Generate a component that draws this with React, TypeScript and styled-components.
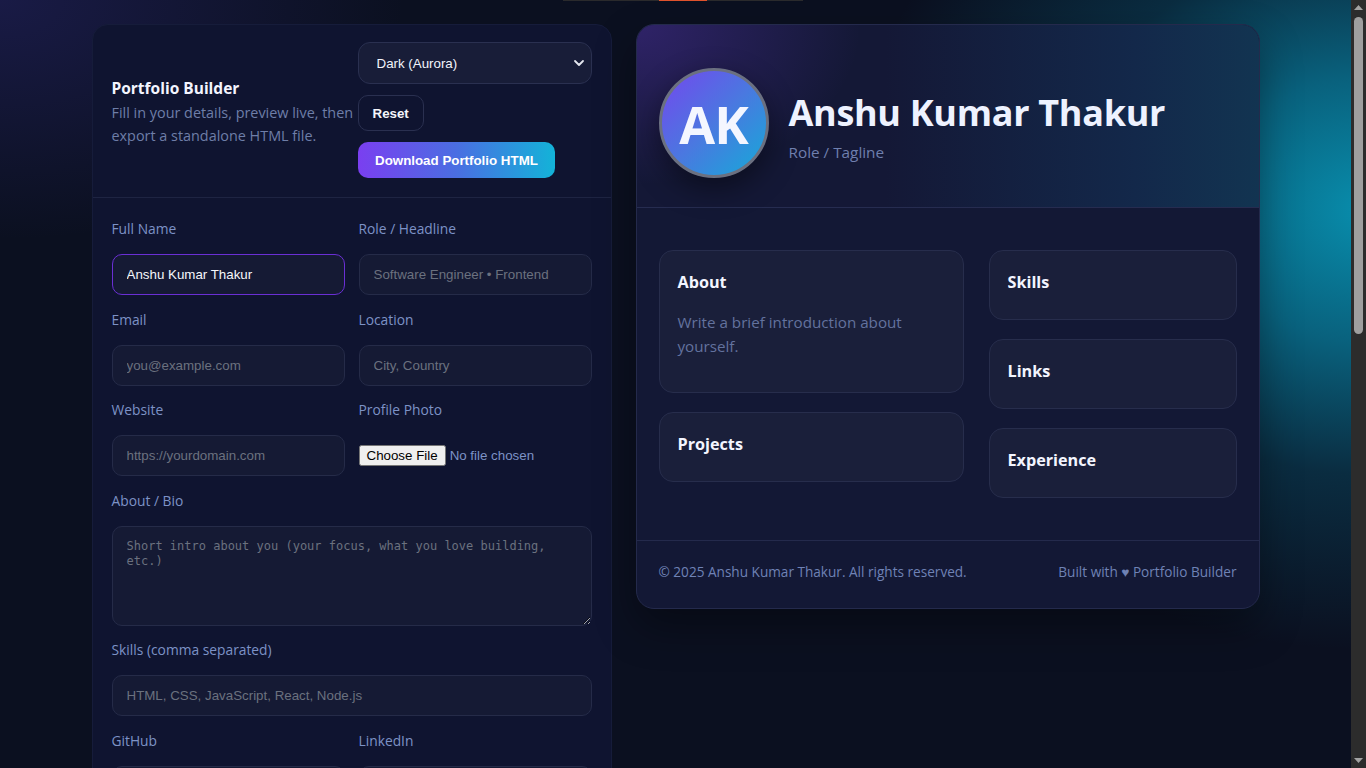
import React from "react";
import styled, { createGlobalStyle } from "styled-components";

const GlobalStyle = createGlobalStyle`
  html, body { margin: 0; padding: 0; }
  body {
    padding-right: 15px;
    background-color: #0b1020;
    background-image:
      radial-gradient(540px 320px at 0% 0%, rgba(70, 60, 190, 0.24), transparent 75%),
      radial-gradient(520px 440px at 100% 210px, rgba(8, 148, 180, 0.95) 0%, rgba(8, 132, 165, 0.7) 30%, rgba(8, 110, 140, 0.3) 60%, transparent 100%);
    background-repeat: no-repeat;
    font-family: "Open Sans", "Noto Sans", sans-serif;
    color: #e5e9f7;
  }
  * { box-sizing: border-box; }
`;

const Loader = styled.div`
  position: fixed;
  top: 0;
  left: 563px;
  width: 240px;
  height: 1px;
  background: #2a2a2c;
  display: flex;
  justify-content: center;
  z-index: 10;
`;

const LoaderBar = styled.div`
  width: 48px;
  height: 1px;
  background: #e0522c;
`;

const ScrollTrack = styled.div`
  position: fixed;
  top: 0;
  right: 0;
  bottom: 0;
  width: 15px;
  background: #2c2c2c;
  display: flex;
  flex-direction: column;
  align-items: center;
  z-index: 20;
`;

const ScrollArrow = styled.svg`
  flex: none;
  margin: 5px 0;
`;

const ScrollThumb = styled.div`
  flex: none;
  width: 9px;
  height: 317px;
  margin-top: 2px;
  border-radius: 5px;
  background: #9f9f9f;
`;

const ScrollSpacer = styled.div`
  flex: 1;
`;

const Container = styled.div`
  max-width: 1200px;
  margin: 0 auto;
  padding: 24px 16px 40px;
  display: grid;
  grid-template-columns: minmax(0, 1fr) minmax(0, 1.2fr);
  gap: 24px;
  align-items: start;
`;

const EditorPanel = styled.section`
  background: #0f1430;
  border: 1px solid #161c3a;
  border-radius: 16px;
  overflow: hidden;
`;

const EditorHeader = styled.header`
  display: grid;
  grid-template-columns: minmax(0, 1fr) minmax(0, 1fr);
  gap: 12px;
  align-items: center;
  padding: 17px 19px 19px;
  border-bottom: 1px solid #1e2442;
`;

const Intro = styled.div`
  display: flex;
  flex-direction: column;
  gap: 2px;
  padding-top: 5px;
  margin-right: -10px;
`;

const BuilderTitle = styled.h1`
  margin: 0;
  font-size: 15.5px;
  font-weight: 700;
  line-height: 21px;
  color: #f3f5ff;
`;

const BuilderDesc = styled.p`
  margin: 0;
  font-size: 14.4px;
  line-height: 23px;
  color: #6e7ea8;
`;

const Actions = styled.div`
  display: flex;
  flex-direction: column;
  align-items: flex-start;
  gap: 11px;
`;

const SelectWrap = styled.div`
  position: relative;
  width: 100%;
`;

const ThemeSelect = styled.select`
  appearance: none;
  width: 100%;
  height: 42px;
  padding: 0 18px;
  background: #181d38;
  border: 1px solid #2a3050;
  border-radius: 12px;
  color: #f2f4fb;
  font: 13.333px "Liberation Sans", Arial, sans-serif;
  outline: none;
`;

const Chevron = styled.svg`
  position: absolute;
  right: 7px;
  top: 50%;
  transform: translateY(-50%);
  pointer-events: none;
`;

const GhostButton = styled.button`
  height: 36px;
  padding: 0 14px;
  background: transparent;
  border: 1px solid #2a3050;
  border-radius: 10px;
  color: #f5f6fb;
  font: 700 13.333px "Liberation Sans", Arial, sans-serif;
`;

const GradientButton = styled.button`
  height: 36px;
  padding: 0 17.5px;
  border: none;
  border-radius: 10px;
  background: linear-gradient(90deg, #7a3ff0 0%, #4a6ee2 50%, #13b3d8 100%);
  color: #ffffff;
  font: 700 13.333px "Liberation Sans", Arial, sans-serif;
`;

const Form = styled.div`
  display: grid;
  grid-template-columns: minmax(0, 1fr) minmax(0, 1fr);
  column-gap: 14px;
  row-gap: 14.5px;
  padding: 21px 19px 24px;
`;

const Field = styled.label<{ $wide?: boolean }>`
  display: flex;
  flex-direction: column;
  gap: 15px;
  min-width: 0;
  grid-column: ${(p) => (p.$wide ? "1 / -1" : "auto")};
`;

const FieldLabel = styled.span`
  font-size: 13.8px;
  line-height: 20px;
  color: #7d92c6;
`;

const TextInput = styled.input<{ $active?: boolean }>`
  width: 100%;
  height: 41px;
  padding: 0 14px;
  background: #151a34;
  border: 1px solid ${(p) => (p.$active ? "#6a2fd4" : "#252b48")};
  border-radius: 10px;
  color: #f6f7fb;
  font: 13.333px "Liberation Sans", Arial, sans-serif;
  outline: none;
  &::placeholder { color: #6b717f; }
`;

const FileRow = styled.div`
  height: 41px;
  display: flex;
  align-items: center;
  min-width: 0;
`;

const FileInput = styled.input`
  max-width: 100%;
  font: 13.333px "Liberation Sans", Arial, sans-serif;
  color: #7d92c6;
`;

const TextArea = styled.textarea<{ $h: number }>`
  width: 100%;
  height: ${(p) => p.$h}px;
  padding: 12px 14px;
  background: #151a34;
  border: 1px solid #252b48;
  border-radius: 10px;
  color: #f6f7fb;
  font: 12px "DejaVu Sans Mono", "Liberation Mono", monospace;
  line-height: 15px;
  resize: vertical;
  outline: none;
  &::placeholder { color: #6b717f; }
`;

const PreviewPanel = styled.section`
  background: #131835;
  border: 1px solid #242a4c;
  border-radius: 18px;
  overflow: hidden;
  box-shadow: 0 18px 40px rgba(0, 0, 0, 0.35);
`;

const Hero = styled.header`
  display: flex;
  align-items: center;
  gap: 20px;
  padding: 43px 22px 29px;
  border-bottom: 1px solid #262c50;
  background:
    radial-gradient(280px 200px at 0% 0%, rgba(110, 60, 220, 0.3), transparent 80%),
    linear-gradient(90deg, #141836 0%, #141836 40%, #13284a 80%, #123451 100%);
`;

const Avatar = styled.div`
  flex: none;
  width: 110px;
  height: 110px;
  border-radius: 50%;
  border: 3px solid #6b7080;
  background: linear-gradient(135deg, #7447ee 0%, #4a78e0 50%, #15aad8 100%);
  display: flex;
  align-items: center;
  justify-content: center;
  color: #f4f6ff;
  font-size: 52px;
  font-weight: 700;
  letter-spacing: -1px;
  box-shadow: 0 10px 30px rgba(0, 0, 0, 0.45);
`;

const HeroText = styled.div`
  display: flex;
  flex-direction: column;
  gap: 4px;
  margin-top: 6px;
`;

const Name = styled.h2`
  margin: 0;
  font-size: 36px;
  font-weight: 700;
  line-height: 48px;
  color: #eef2ff;
  letter-spacing: -0.3px;
`;

const Tagline = styled.p`
  margin: 0;
  font-size: 15.3px;
  line-height: 22px;
  color: #6f7fae;
`;

const PreviewBody = styled.div`
  display: grid;
  grid-template-columns: 1.23fr 1fr;
  gap: 25px;
  padding: 42px 22px 42px;
`;

const CardColumn = styled.div`
  display: flex;
  flex-direction: column;
  gap: 19px;
`;

const Card = styled.article`
  background: #1a1f3a;
  border: 1px solid #272d4c;
  border-radius: 14px;
  padding: 19px 18px;
`;

const CardTitle = styled.h3`
  margin: 0 0 6px;
  font-size: 16.2px;
  font-weight: 700;
  line-height: 24px;
  color: #f3f5ff;
`;

const CardText = styled.p`
  margin: 16px 0 15px;
  font-size: 15.2px;
  line-height: 24px;
  color: #63729e;
`;

const Footer = styled.footer`
  display: flex;
  justify-content: space-between;
  align-items: center;
  padding: 20px 22px 25px;
  border-top: 1px solid #242a4c;
  font-size: 13.6px;
  line-height: 22px;
  color: #6f82b5;
`;

export default function App() {
  return (
    <>
      <GlobalStyle />
      <Loader>
        <LoaderBar />
      </Loader>
      <ScrollTrack>
        <ScrollArrow width="9" height="5" viewBox="0 0 9 5">
          <path d="M0 5 L4.5 0 L9 5 Z" fill="#a3a3a3" />
        </ScrollArrow>
        <ScrollThumb />
        <ScrollSpacer />
        <ScrollArrow width="9" height="5" viewBox="0 0 9 5">
          <path d="M0 0 L4.5 5 L9 0 Z" fill="#a3a3a3" />
        </ScrollArrow>
      </ScrollTrack>
      <Container>
        <EditorPanel>
          <EditorHeader>
            <Intro>
              <BuilderTitle>Portfolio Builder</BuilderTitle>
              <BuilderDesc>
                Fill in your details, preview live, then export a standalone HTML file.
              </BuilderDesc>
            </Intro>
            <Actions>
              <SelectWrap>
                <ThemeSelect defaultValue="aurora">
                  <option value="aurora">Dark (Aurora)</option>
                  <option value="light">Light</option>
                </ThemeSelect>
                <Chevron width="12" height="8" viewBox="0 0 12 8">
                  <path d="M2 2 L6 6 L10 2" fill="none" stroke="#e5e7ef" strokeWidth="1.8" strokeLinecap="round" strokeLinejoin="round" />
                </Chevron>
              </SelectWrap>
              <GhostButton>Reset</GhostButton>
              <GradientButton>Download Portfolio HTML</GradientButton>
            </Actions>
          </EditorHeader>
          <Form>
            <Field>
              <FieldLabel>Full Name</FieldLabel>
              <TextInput $active defaultValue="Anshu Kumar Thakur" />
            </Field>
            <Field>
              <FieldLabel>Role / Headline</FieldLabel>
              <TextInput placeholder="Software Engineer • Frontend" />
            </Field>
            <Field>
              <FieldLabel>Email</FieldLabel>
              <TextInput placeholder="you@example.com" />
            </Field>
            <Field>
              <FieldLabel>Location</FieldLabel>
              <TextInput placeholder="City, Country" />
            </Field>
            <Field>
              <FieldLabel>Website</FieldLabel>
              <TextInput placeholder="https://yourdomain.com" />
            </Field>
            <Field as="div">
              <FieldLabel>Profile Photo</FieldLabel>
              <FileRow>
                <FileInput type="file" />
              </FileRow>
            </Field>
            <Field $wide>
              <FieldLabel>About / Bio</FieldLabel>
              <TextArea $h={100} placeholder="Short intro about you (your focus, what you love building, etc.)" />
            </Field>
            <Field $wide>
              <FieldLabel>Skills (comma separated)</FieldLabel>
              <TextInput placeholder="HTML, CSS, JavaScript, React, Node.js" />
            </Field>
            <Field>
              <FieldLabel>GitHub</FieldLabel>
              <TextInput placeholder="https://github.com/username" />
            </Field>
            <Field>
              <FieldLabel>LinkedIn</FieldLabel>
              <TextInput placeholder="https://linkedin.com/in/username" />
            </Field>
            <Field>
              <FieldLabel>Twitter / X</FieldLabel>
              <TextInput placeholder="https://x.com/username" />
            </Field>
            <Field>
              <FieldLabel>Phone</FieldLabel>
              <TextInput placeholder="+91 98765 43210" />
            </Field>
            <Field $wide>
              <FieldLabel>Projects (one per line: Title | Link | Description)</FieldLabel>
              <TextArea $h={140} placeholder="Portfolio Builder | https://github.com/... | A tool to generate portfolios" />
            </Field>
            <Field $wide>
              <FieldLabel>Experience (one per line: Role | Company | Period)</FieldLabel>
              <TextArea $h={140} placeholder="Frontend Developer | Company | 2023 - Present" />
            </Field>
            <Field $wide>
              <FieldLabel>Education</FieldLabel>
              <TextArea $h={100} placeholder="B.Tech in Computer Science | University | 2020 - 2024" />
            </Field>
            <Field $wide>
              <FieldLabel>Certifications</FieldLabel>
              <TextArea $h={100} placeholder="One certification per line" />
            </Field>
          </Form>
        </EditorPanel>
        <PreviewPanel>
          <Hero>
            <Avatar>AK</Avatar>
            <HeroText>
              <Name>Anshu Kumar Thakur</Name>
              <Tagline>Role / Tagline</Tagline>
            </HeroText>
          </Hero>
          <PreviewBody>
            <CardColumn>
              <Card>
                <CardTitle>About</CardTitle>
                <CardText>Write a brief introduction about yourself.</CardText>
              </Card>
              <Card>
                <CardTitle>Projects</CardTitle>
              </Card>
            </CardColumn>
            <CardColumn>
              <Card>
                <CardTitle>Skills</CardTitle>
              </Card>
              <Card>
                <CardTitle>Links</CardTitle>
              </Card>
              <Card>
                <CardTitle>Experience</CardTitle>
              </Card>
            </CardColumn>
          </PreviewBody>
          <Footer>
            <span>© 2025 Anshu Kumar Thakur. All rights reserved.</span>
            <span>Built with ♥ Portfolio Builder</span>
          </Footer>
        </PreviewPanel>
      </Container>
    </>
  );
}
